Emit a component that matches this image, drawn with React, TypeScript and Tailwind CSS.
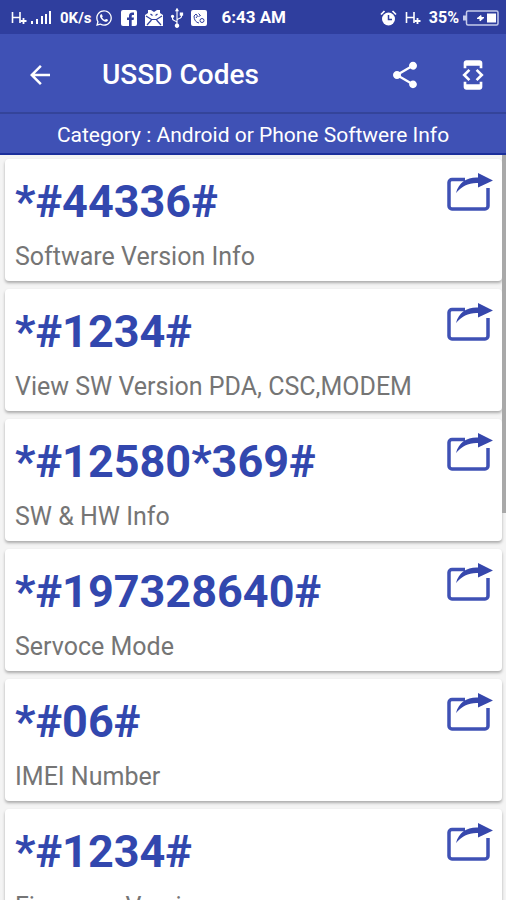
import { FaUsb, FaWhatsapp } from "react-icons/fa";
import { MdArrowBack, MdDeveloperMode, MdShare } from "react-icons/md";

const codes = [
  { code: "*#44336#", label: "Software Version Info" },
  { code: "*#1234#", label: "View SW Version PDA, CSC,MODEM" },
  { code: "*#12580*369#", label: "SW & HW Info" },
  { code: "*#197328640#", label: "Servoce Mode" },
  { code: "*#06#", label: "IMEI Number" },
  { code: "*#1234#", label: "Firmware Version" },
];

const NetworkIcon = () => (
  <svg className="h-4 w-4" viewBox="0 0 16 16" fill="none" stroke="currentColor">
    <path d="M1.5 2v11M9 2v11M1.5 7.500H9" strokeWidth="1.6" />
    <path d="M12.5 8v6M9.5 11h6" strokeWidth="1.8" />
  </svg>
);

const SignalIcon = () => (
  <svg className="h-4 w-5" viewBox="0 0 20 16" fill="currentColor">
    <path d="M0 11h2v3H0zM5 9h2v5H5zM10 6h2v8h-2zM14 4h2v10h-2zM18 1h2v13h-2z" />
  </svg>
);

const FacebookIcon = () => (
  <svg className="h-4 w-4" viewBox="0 0 16 16">
    <rect width="16" height="16" rx="2" fill="#fff" />
    <path d="M8 16V10H6V7.500h2V6c0-2.200 1.200-3.500 3.300-3.500H13V5h-1.200c-.8 0-1.100.4-1.100 1.100v1.400H13l-.4 2.500h-1.900v6z" fill="#2f3e9e" />
  </svg>
);

const MailIcon = () => (
  <svg className="h-4 w-[18px]" viewBox="0 0 18 16">
    <path d="M0 5l3-2V0h3l3 2 3-2h3v3l3 2v11H0z" fill="#fff" />
    <path d="M1 6l5.500 3.500h5L17 6M2 15l4.500-5M16 15l-4.500-5M5.500 4l2 1.500M12.500 4l-2 1.500" fill="none" stroke="#2f3e9e" strokeWidth="1.200" />
  </svg>
);

const CallIcon = () => (
  <svg className="h-4 w-4" viewBox="0 0 16 16">
    <rect width="16" height="16" rx="2" fill="#fff" />
    <path d="M3 6c0 4 2 6.500 5 7M3 6l2-2 1.500 2L5 8M7.500 3.500l2 2-2 1" fill="none" stroke="#2f3e9e" strokeWidth="1" />
    <circle cx="11" cy="10.500" r="2" fill="none" stroke="#2f3e9e" />
  </svg>
);

const AlarmIcon = () => (
  <svg className="h-4 w-[17px]" viewBox="0 0 17 16">
    <circle cx="8.500" cy="9" r="6.500" fill="#fff" />
    <path d="M1 4.500L4.500 1M16 4.500L12.500 1" stroke="#fff" strokeWidth="1.700" />
    <path d="M8.500 5v4.500H12" fill="none" stroke="#2f3e9e" strokeWidth="1.500" />
  </svg>
);

const BatteryIcon = () => (
  <svg className="h-4 w-9" viewBox="0 0 36 16">
    <rect x="3.500" y="1" width="31.500" height="14" rx="1.500" fill="none" stroke="#c5cbea" strokeWidth="1.500" />
    <path d="M0 5.500h3v5H0z" fill="#c5cbea" />
    <path d="M24 3.500h9v9h-9z" fill="#fff" />
    <path d="M14 8.500l4-3v2h3l-4 3.500V8.500z" fill="#fff" stroke="#fff" />
  </svg>
);

const ExportIcon = () => (
  <svg className="h-[38px] w-[46px]" viewBox="0 0 46 38">
    <path d="M18 6.500H5A3 3 0 0 0 2 9.500V33a3 3 0 0 0 3 3h33a3 3 0 0 0 3-3V15" fill="none" stroke="#3f51b5" strokeWidth="3.500" />
    <path d="M9 20C12 9 20 4 31 4.500V0l15 7.500L31 14.500V10C22 9.500 15 13 9 20z" fill="#3647ac" />
  </svg>
);

const StatusBar = () => {
  return (
    <div className="flex h-[34px] shrink-0 items-center justify-between bg-[#2f3e9e] pt-[2px] pr-[7px] pl-[11px] text-white">
      <div className="flex items-center">
        <NetworkIcon />
        <div className="ml-1 flex">
          <SignalIcon />
        </div>
        <span className="ml-[9px] text-[15px] font-bold">0K/s</span>
        <FaWhatsapp className="ml-1 h-[18px] w-[18px]" />
        <div className="ml-2 flex items-center gap-2">
          <FacebookIcon />
          <MailIcon />
        </div>
        <FaUsb className="mx-1 h-[18px] w-5 -rotate-90" />
        <CallIcon />
        <span className="ml-[14px] text-[17px] font-bold">6:43 AM</span>
      </div>
      <div className="flex items-center">
        <AlarmIcon />
        <div className="ml-2">
          <NetworkIcon />
        </div>
        <span className="mr-1 ml-2 text-base font-bold">35%</span>
        <BatteryIcon />
      </div>
    </div>
  );
};

const App = () => {
  return (
    <div className="flex h-screen flex-col overflow-hidden bg-[#f4f4f4] font-['Roboto',sans-serif]">
      <StatusBar />
      <header className="flex h-20 shrink-0 items-center border-b-2 border-[#34449a] bg-[#3f51b5] pt-1 pr-[17px] pl-[25px] text-white">
        <button type="button" aria-label="Back">
          <MdArrowBack className="h-[30px] w-[30px]" />
        </button>
        <h1 className="ml-[47px] flex-1 text-[28px] font-medium">USSD Codes</h1>
        <button type="button" aria-label="Share" className="mr-9">
          <MdShare className="h-8 w-8" />
        </button>
        <button type="button" aria-label="Developer mode">
          <MdDeveloperMode className="h-8 w-8" />
        </button>
      </header>
      <div className="flex h-[41px] shrink-0 items-center justify-center border-b-2 border-[#1b2f9b] bg-[#3f51b5] pt-1 text-[21px] text-white">
        Category : Android or Phone Softwere Info
      </div>

      <main className="relative min-h-0 flex-1 overflow-hidden">
        <ul className="flex flex-col gap-2 pt-1 pr-1 pl-[5px]">
          {codes.map((item, i) => (
            <li
              key={i}
              className="flex h-[122px] shrink-0 justify-between rounded-sm bg-white pr-[9px] pl-[10px] shadow-[0_2px_3px_rgba(0,0,0,0.3)]"
            >
              <div className="pt-4">
                <h2 className="text-[45px] leading-[54px] font-bold text-[#3247ae]">
                  {item.code}
                </h2>
                <p className="pt-3 text-[25px] leading-8 text-[#757575]">{item.label}</p>
              </div>
              <button type="button" aria-label="Export" className="mt-[14px] self-start">
                <ExportIcon />
              </button>
            </li>
          ))}
        </ul>
        {/* scroll thumb */}
        <div className="absolute top-0 right-0 h-[48%] w-1 bg-[#a9a9a9]" />
      </main>
    </div>
  );
};

export default App;
